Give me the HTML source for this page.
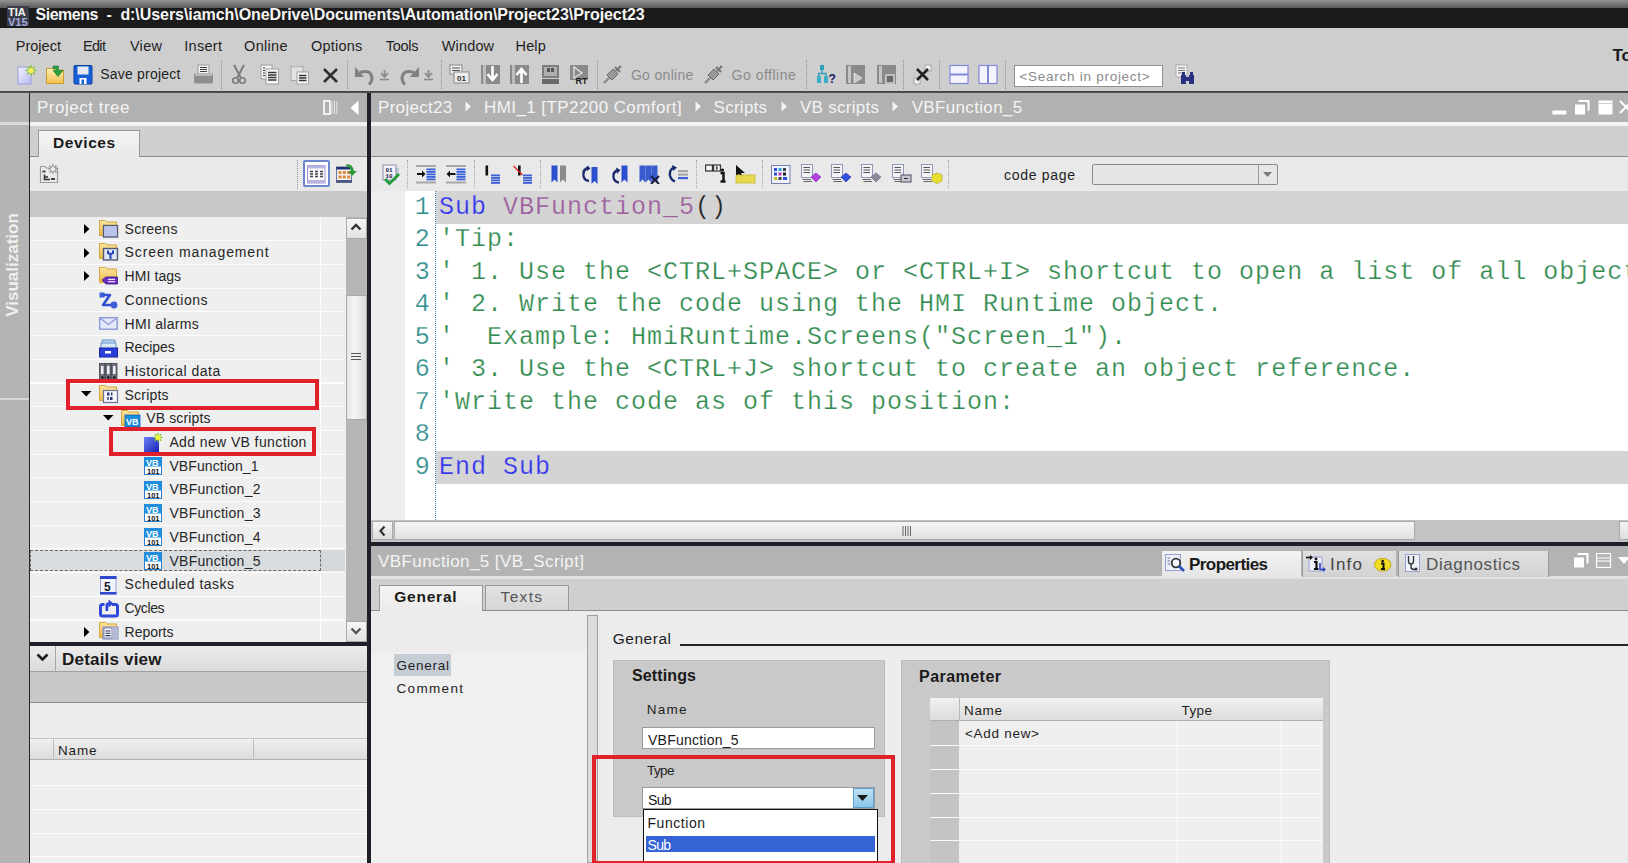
<!DOCTYPE html>
<html><head><meta charset="utf-8"><style>
html,body{margin:0;padding:0;width:1628px;height:863px;overflow:hidden;background:#cecece;}
body{position:relative;font-family:"Liberation Sans",sans-serif;}
div{position:absolute;}
.t{white-space:pre;}
</style></head><body>
<div style="left:0px;top:0px;width:1628px;height:8px;background:linear-gradient(#929292,#5a5a5a)"></div>
<div style="left:0px;top:8px;width:1628px;height:20px;background:#1b1b1b"></div>
<svg style="position:absolute;left:7px;top:6px;" width="22" height="20" viewBox="0 0 22 20"><rect x="0" y="0" width="22" height="20" fill="#3a3d4a"/><text x="1" y="10" font-family="Liberation Sans" font-weight="bold" font-size="11" fill="#f4f4f4">TIA</text><text x="1" y="19.5" font-family="Liberation Sans" font-weight="bold" font-size="11" fill="#a9aee0">V15</text></svg>
<div class="t" style="left:35.60px;top:6.76px;font-size:16px;line-height:16px;color:#f6f6f6;letter-spacing:-0.519px;font-family:'Liberation Sans', sans-serif;font-weight:bold;">Siemens</div>
<div class="t" style="left:106.50px;top:6.76px;font-size:16px;line-height:16px;color:#f6f6f6;letter-spacing:0.000px;font-family:'Liberation Sans', sans-serif;font-weight:bold;">-</div>
<div class="t" style="left:120.40px;top:6.76px;font-size:16px;line-height:16px;color:#f6f6f6;letter-spacing:-0.061px;font-family:'Liberation Sans', sans-serif;font-weight:bold;">d:\Users\iamch\OneDrive\Documents\Automation\Project23\Project23</div>
<div style="left:0px;top:28px;width:1628px;height:63px;background:#cecece"></div>
<div style="left:0px;top:91px;width:1628px;height:2px;background:linear-gradient(#3a3a3a,#5a5a5a)"></div>
<div class="t" style="left:15.70px;top:38.93px;font-size:14.5px;line-height:14.5px;color:#1e1e1e;letter-spacing:0.028px;font-family:'Liberation Sans', sans-serif;font-weight:normal;">Project</div>
<div class="t" style="left:82.90px;top:38.93px;font-size:14.5px;line-height:14.5px;color:#1e1e1e;letter-spacing:-0.629px;font-family:'Liberation Sans', sans-serif;font-weight:normal;">Edit</div>
<div class="t" style="left:129.90px;top:38.93px;font-size:14.5px;line-height:14.5px;color:#1e1e1e;letter-spacing:0.311px;font-family:'Liberation Sans', sans-serif;font-weight:normal;">View</div>
<div class="t" style="left:184.30px;top:38.93px;font-size:14.5px;line-height:14.5px;color:#1e1e1e;letter-spacing:0.287px;font-family:'Liberation Sans', sans-serif;font-weight:normal;">Insert</div>
<div class="t" style="left:244.10px;top:38.93px;font-size:14.5px;line-height:14.5px;color:#1e1e1e;letter-spacing:0.297px;font-family:'Liberation Sans', sans-serif;font-weight:normal;">Online</div>
<div class="t" style="left:311.00px;top:38.93px;font-size:14.5px;line-height:14.5px;color:#1e1e1e;letter-spacing:0.205px;font-family:'Liberation Sans', sans-serif;font-weight:normal;">Options</div>
<div class="t" style="left:385.80px;top:38.93px;font-size:14.5px;line-height:14.5px;color:#1e1e1e;letter-spacing:-0.288px;font-family:'Liberation Sans', sans-serif;font-weight:normal;">Tools</div>
<div class="t" style="left:441.70px;top:38.93px;font-size:14.5px;line-height:14.5px;color:#1e1e1e;letter-spacing:0.166px;font-family:'Liberation Sans', sans-serif;font-weight:normal;">Window</div>
<div class="t" style="left:515.60px;top:38.93px;font-size:14.5px;line-height:14.5px;color:#1e1e1e;letter-spacing:0.093px;font-family:'Liberation Sans', sans-serif;font-weight:normal;">Help</div>
<div class="t" style="left:1612.50px;top:46.61px;font-size:17px;line-height:17px;color:#1a1a1a;letter-spacing:0.000px;font-family:'Liberation Sans', sans-serif;font-weight:bold;">To</div>
<svg style="position:absolute;left:17px;top:64px;" width="22" height="21" viewBox="0 0 22 21"><defs><linearGradient id="np" x1="0" y1="0" x2="1" y2="1"><stop offset="0" stop-color="#f4f4ff"/><stop offset="1" stop-color="#b4b8f0"/></linearGradient></defs><rect x="1" y="3" width="13" height="17" fill="url(#np)" stroke="#9a9ee0" stroke-width="1"/><path d="M14 1 V12 M8.5 6.5 H19.5 M10 2.5 L18 10.5 M18 2.5 L10 10.5" stroke="#8bc83a" stroke-width="1.5"/><circle cx="14" cy="6.5" r="2.6" fill="#f8f050"/></svg>
<svg style="position:absolute;left:45px;top:64px;" width="22" height="21" viewBox="0 0 22 21"><defs><linearGradient id="op" x1="0" y1="0" x2="0" y2="1"><stop offset="0" stop-color="#fff0b0"/><stop offset="1" stop-color="#f0c050"/></linearGradient></defs><path d="M1.5 4.5 H8 L9.5 6 H18.5 V19.5 H1.5Z" fill="url(#op)" stroke="#c89a30" stroke-width="1"/><path d="M8 2 H13.5 V6.5 H18 L13 12.5 L8 6.5 H11 V4.5 H8Z" fill="#2aa040" stroke="#147a2a" stroke-width="0.6"/></svg>
<svg style="position:absolute;left:73px;top:64px;" width="20" height="21" viewBox="0 0 20 21"><rect x="1" y="1.5" width="18" height="18.5" rx="1" fill="#1660d8" stroke="#0c3ea0" stroke-width="1"/><rect x="4.5" y="2.5" width="11" height="8" fill="#e6e9f2"/><rect x="6.5" y="14" width="7" height="6" fill="#fff"/><rect x="8.5" y="15.5" width="2.5" height="4.5" fill="#1660d8"/></svg>
<div class="t" style="left:100.30px;top:67.45px;font-size:14px;line-height:14px;color:#1e1e1e;letter-spacing:0.198px;font-family:'Liberation Sans', sans-serif;font-weight:normal;">Save project</div>
<svg style="position:absolute;left:193px;top:64px;" width="21" height="21" viewBox="0 0 21 21"><rect x="5" y="1" width="11" height="9" fill="#f2f2f2" stroke="#999" stroke-width="1"/><path d="M7 3.5 H14 M7 5.5 H14 M7 7.5 H14" stroke="#444" stroke-width="1"/><path d="M1 11 Q1 9 3 9 H18 Q20 9 20 11 V18 Q20 19.5 18.5 19.5 H2.5 Q1 19.5 1 18Z" fill="#8f8f8f"/><rect x="2" y="9" width="17" height="3" fill="#b8b8b8"/></svg>
<div style="left:220.6px;top:60px;width:0;height:28.5px;border-left:1px dotted #8e8e8e"></div>
<svg style="position:absolute;left:231px;top:64px;" width="17" height="21" viewBox="0 0 17 21"><path d="M3 1 L10 14 M13 1 L6 14" stroke="#7b7b7b" stroke-width="2"/><circle cx="4.5" cy="16.5" r="2.8" fill="none" stroke="#7b7b7b" stroke-width="1.6"/><circle cx="11.5" cy="16.5" r="2.8" fill="none" stroke="#7b7b7b" stroke-width="1.6"/></svg>
<svg style="position:absolute;left:259.5px;top:64px;" width="20" height="21" viewBox="0 0 20 21"><rect x="1" y="1" width="11" height="14" fill="#f4f4f4" stroke="#a0a0a0" stroke-width="1"/><path d="M3 4 H5 M3 6.5 H5 M3 9 H5 M3 11.5 H5" stroke="#333" stroke-width="1.1"/><rect x="6" y="5" width="12.5" height="15" fill="#f8f8f8" stroke="#a0a0a0" stroke-width="1"/><path d="M8 8.5 H16.5 M8 11 H16.5 M8 13.5 H16.5 M8 16 H16.5" stroke="#333" stroke-width="1.3"/></svg>
<svg style="position:absolute;left:289.5px;top:64px;" width="20" height="21" viewBox="0 0 20 21"><rect x="1" y="2.5" width="12" height="14" fill="#e2e2e2" stroke="#a8a8a8" stroke-width="1"/><rect x="4" y="1" width="6" height="3" fill="#c8c8c8"/><rect x="7" y="8" width="11.5" height="12" fill="#f6f6f6" stroke="#a0a0a0" stroke-width="1"/><path d="M9 11.5 H16.5 M9 14 H16.5 M9 16.5 H16.5" stroke="#333" stroke-width="1.3"/></svg>
<svg style="position:absolute;left:321.5px;top:67px;" width="17" height="17" viewBox="0 0 17 17"><path d="M2 2 L15 15 M15 2 L2 15" stroke="#2e2e2e" stroke-width="2.6"/></svg>
<div style="left:347px;top:60px;width:0;height:28.5px;border-left:1px dotted #8e8e8e"></div>
<svg style="position:absolute;left:354px;top:65px;" width="22" height="21" viewBox="0 0 22 21"><path d="M6 7.5 Q17 4 18 13 Q18 17 15 19.5" stroke="#808080" stroke-width="3" fill="none"/><path d="M1 2 V12 H10Z" fill="#808080"/></svg>
<svg style="position:absolute;left:379px;top:70px;" width="11" height="11" viewBox="0 0 11 11"><path d="M5.5 0 V6 M2 3 L5.5 7 L9 3" stroke="#8a8a8a" stroke-width="1.8" fill="none"/><path d="M1 9.5 H10" stroke="#8a8a8a" stroke-width="1.6"/></svg>
<svg style="position:absolute;left:398px;top:65px;" width="22" height="21" viewBox="0 0 22 21"><path d="M16 7.5 Q5 4 4 13 Q4 17 7 19.5" stroke="#808080" stroke-width="3" fill="none"/><path d="M21 2 V12 H12Z" fill="#808080"/></svg>
<svg style="position:absolute;left:423px;top:70px;" width="11" height="11" viewBox="0 0 11 11"><path d="M5.5 0 V6 M2 3 L5.5 7 L9 3" stroke="#8a8a8a" stroke-width="1.8" fill="none"/><path d="M1 9.5 H10" stroke="#8a8a8a" stroke-width="1.6"/></svg>
<div style="left:441px;top:60px;width:0;height:28.5px;border-left:1px dotted #8e8e8e"></div>
<svg style="position:absolute;left:448.5px;top:64px;" width="22" height="21" viewBox="0 0 22 21"><rect x="1" y="1" width="12" height="9" fill="#f0f0f0" stroke="#888" stroke-width="1"/><path d="M3 4 H11 M3 6.5 H11" stroke="#555" stroke-width="1"/><rect x="5" y="8" width="15" height="11" fill="#ececec" stroke="#888" stroke-width="1"/><text x="8" y="17" font-family="Liberation Sans" font-weight="bold" font-size="8" fill="#333">01</text></svg>
<svg style="position:absolute;left:479.5px;top:64px;" width="21" height="21" viewBox="0 0 21 21"><rect x="1" y="1" width="19" height="19" fill="#8a8a8a"/><rect x="3" y="1" width="3" height="19" fill="#bdbdbd"/><path d="M12.5 2 V14 M7.5 10 L12.5 16 L17.5 10" stroke="#fff" stroke-width="2.6" fill="none"/></svg>
<svg style="position:absolute;left:509px;top:64px;" width="21" height="21" viewBox="0 0 21 21"><rect x="1" y="1" width="19" height="19" fill="#8a8a8a"/><rect x="3" y="1" width="3" height="19" fill="#bdbdbd"/><path d="M12.5 19 V7 M7.5 11 L12.5 5 L17.5 11" stroke="#fff" stroke-width="2.6" fill="none"/></svg>
<svg style="position:absolute;left:540.5px;top:64px;" width="19" height="21" viewBox="0 0 19 21"><rect x="1" y="1" width="17" height="13" fill="#7d7d7d"/><rect x="3" y="3" width="13" height="9" fill="#b0b0b0"/><rect x="6" y="4" width="3" height="4" fill="#555"/><rect x="10" y="4" width="3" height="4" fill="#555"/><rect x="1" y="15" width="17" height="5" fill="#6a6a6a"/></svg>
<svg style="position:absolute;left:569px;top:64px;" width="21" height="21" viewBox="0 0 21 21"><rect x="1" y="1" width="18" height="15" fill="#8a8a8a"/><path d="M5 3 L13 9 L5 14Z" fill="none" stroke="#e8e8e8" stroke-width="1.2"/><text x="6.5" y="20" font-family="Liberation Sans" font-weight="bold" font-size="9" fill="#1a1a1a">RT</text></svg>
<div style="left:596.8px;top:60px;width:0;height:28.5px;border-left:1px dotted #8e8e8e"></div>
<svg style="position:absolute;left:602px;top:64px;" width="21" height="21" viewBox="0 0 21 21"><path d="M2 19 L7 14" stroke="#8a8a8a" stroke-width="2.4"/><path d="M5 11 L11 5 L16 10 L10 16Z" fill="#9a9a9a" stroke="#6a6a6a" stroke-width="1"/><path d="M13 3 L18 8 M14 7 L19 2" stroke="#777" stroke-width="2.2"/></svg>
<div class="t" style="left:630.90px;top:67.75px;font-size:14px;line-height:14px;color:#8b8b8b;letter-spacing:0.321px;font-family:'Liberation Sans', sans-serif;font-weight:normal;">Go online</div>
<svg style="position:absolute;left:703px;top:64px;" width="21" height="21" viewBox="0 0 21 21"><path d="M2 19 L7 14" stroke="#8a8a8a" stroke-width="2.4"/><path d="M5 11 L11 5 L16 10 L10 16Z" fill="#9a9a9a" stroke="#6a6a6a" stroke-width="1"/><path d="M13 3 L18 8 M14 7 L19 2" stroke="#777" stroke-width="2.2"/></svg>
<div class="t" style="left:731.60px;top:67.75px;font-size:14px;line-height:14px;color:#8b8b8b;letter-spacing:0.492px;font-family:'Liberation Sans', sans-serif;font-weight:normal;">Go offline</div>
<div style="left:806px;top:60px;width:0;height:28.5px;border-left:1px dotted #8e8e8e"></div>
<svg style="position:absolute;left:815.5px;top:64px;" width="21" height="21" viewBox="0 0 21 21"><rect x="4" y="1" width="4" height="5" fill="#30a0b8"/><path d="M6 6 V9 M2.5 12 V9.5 H10 V12" stroke="#30a0b8" stroke-width="1.4" fill="none"/><rect x="1" y="12" width="4" height="7" fill="#3ab0c8"/><rect x="8" y="12" width="4" height="7" fill="#3ab0c8"/><text x="12.5" y="19" font-family="Liberation Sans" font-weight="bold" font-size="12" fill="#1a2060">?</text></svg>
<svg style="position:absolute;left:845px;top:64px;" width="21" height="21" viewBox="0 0 21 21"><rect x="1" y="1" width="19" height="19" fill="#8a8a8a"/><rect x="3" y="2" width="3" height="17" fill="#c4c4c4"/><path d="M9 9 L17 14 L9 19Z" fill="#c8c8c8" stroke="#e8e8e8" stroke-width="0.8"/></svg>
<svg style="position:absolute;left:876px;top:64px;" width="21" height="21" viewBox="0 0 21 21"><rect x="1" y="1" width="19" height="19" fill="#8a8a8a"/><rect x="3" y="2" width="3" height="17" fill="#c4c4c4"/><rect x="10" y="11" width="8" height="8" fill="#6a6a6a" stroke="#e8e8e8" stroke-width="1.2"/></svg>
<div style="left:903.3px;top:60px;width:0;height:28.5px;border-left:1px dotted #8e8e8e"></div>
<svg style="position:absolute;left:912.5px;top:64px;" width="20" height="21" viewBox="0 0 20 21"><rect x="12" y="1" width="6" height="6" fill="#f2f2f2" stroke="#999" stroke-width="0.8"/><rect x="1" y="14" width="6" height="6" fill="#f2f2f2" stroke="#999" stroke-width="0.8"/><path d="M4 5 L15 16 M15 5 L4 16" stroke="#222" stroke-width="2.6"/></svg>
<div style="left:939px;top:60px;width:0;height:28.5px;border-left:1px dotted #8e8e8e"></div>
<svg style="position:absolute;left:948.5px;top:64px;" width="20" height="21" viewBox="0 0 20 21"><rect x="1" y="1.5" width="18" height="18" fill="#f4f4ff" stroke="#8088d8" stroke-width="1.2"/><path d="M1 10.5 H19" stroke="#8088d8" stroke-width="2"/></svg>
<svg style="position:absolute;left:978px;top:64px;" width="20" height="21" viewBox="0 0 20 21"><rect x="1" y="1.5" width="18" height="18" fill="#f4f4ff" stroke="#8088d8" stroke-width="1.2"/><path d="M10 1.5 V19.5" stroke="#8088d8" stroke-width="2"/></svg>
<div style="left:1005.2px;top:60px;width:0;height:28.5px;border-left:1px dotted #8e8e8e"></div>
<div style="left:1013.8px;top:65.4px;width:149.4px;height:21.6px;background:#fff;border:1px solid #8f8f8f;box-sizing:border-box"></div>
<div class="t" style="left:1019.50px;top:69.77px;font-size:13.5px;line-height:13.5px;color:#8a8a8a;letter-spacing:0.729px;font-family:'Liberation Sans', sans-serif;font-weight:normal;">&lt;Search in project&gt;</div>
<svg style="position:absolute;left:1174.5px;top:64px;" width="21" height="21" viewBox="0 0 21 21"><rect x="1" y="1" width="11" height="12" fill="#f0f0f0" stroke="#a0a0a0" stroke-width="0.8"/><path d="M3 4 H10 M3 6.5 H10 M3 9 H10" stroke="#777" stroke-width="1"/><rect x="6" y="11" width="5" height="9" fill="#2a3080"/><rect x="14" y="11" width="5" height="9" fill="#2a3080"/><rect x="10" y="13" width="5" height="4" fill="#2a3080"/><rect x="7" y="8" width="3" height="3" fill="#2a3080"/><rect x="15" y="8" width="3" height="3" fill="#2a3080"/></svg>
<div style="left:0px;top:93px;width:28.5px;height:770px;background:#b4b4b4"></div>
<div style="left:28.5px;top:93px;width:1.6px;height:770px;background:#23232b"></div>
<div style="left:0px;top:122px;width:29px;height:3px;background:#dadada"></div>
<div style="left:0px;top:398px;width:29px;height:2px;background:#d8d8d8"></div>
<div class="t" style="left:-41.6px;top:254.6px;width:110px;height:20px;font-size:17px;line-height:20px;color:#efefef;font-weight:bold;transform:rotate(-90deg);text-align:center;letter-spacing:0px">Visualization</div>
<div style="left:30px;top:93px;width:337px;height:29px;background:#b1b1b1"></div>
<div class="t" style="left:37.00px;top:99.01px;font-size:17px;line-height:17px;color:#f4f4f4;letter-spacing:0.507px;font-family:'Liberation Sans', sans-serif;font-weight:normal;">Project tree</div>
<div style="left:30px;top:122px;width:337px;height:4px;background:#f2f2f2"></div>
<div style="left:30px;top:126px;width:337px;height:30px;background:#cfcfcf"></div>
<div style="left:30px;top:156px;width:337px;height:1px;background:#8d8d8d"></div>
<div style="left:38px;top:130px;width:102px;height:27px;background:linear-gradient(#f4f4f4,#e9e9e9);border:1px solid #999;border-bottom:none;box-sizing:border-box"></div>
<div class="t" style="left:53.00px;top:134.88px;font-size:15.5px;line-height:15.5px;color:#1a1a1a;letter-spacing:0.599px;font-family:'Liberation Sans', sans-serif;font-weight:bold;">Devices</div>
<div style="left:30px;top:157px;width:337px;height:34px;background:#e9e9e9"></div>
<div style="left:30px;top:191px;width:337px;height:26px;background:#c7c7c7"></div>
<div style="left:30px;top:217px;width:337px;height:425px;background:#efefef"></div>
<div style="left:367px;top:93px;width:4px;height:770px;background:#1f1f29"></div>
<div style="left:371px;top:93px;width:1257px;height:29px;background:#b1b1b1"></div>
<div style="left:371px;top:122px;width:1257px;height:4px;background:#f2f2f2"></div>
<div style="left:371px;top:126px;width:1257px;height:30px;background:#cfcfcf"></div>
<div style="left:371px;top:156px;width:1257px;height:1px;background:#8d8d8d"></div>
<div style="left:371px;top:157px;width:1257px;height:34px;background:#e9e9e9"></div>
<div style="left:371px;top:191px;width:1257px;height:329px;background:#ffffff"></div>
<div style="left:371px;top:191px;width:34px;height:329px;background:#eeeeee"></div>
<div style="left:436px;top:191px;width:1192px;height:33px;background:#d4d4d4"></div>
<div style="left:436px;top:451px;width:1192px;height:33px;background:#d4d4d4"></div>
<div style="left:435px;top:191px;width:0;height:329px;border-left:1px dotted #3a8aa0"></div>
<div class="t" style="left:378.00px;top:99.01px;font-size:17px;line-height:17px;color:#f4f4f4;letter-spacing:0.310px;font-family:'Liberation Sans', sans-serif;font-weight:normal;">Project23</div>
<div class="t" style="left:484.10px;top:99.01px;font-size:17px;line-height:17px;color:#f4f4f4;letter-spacing:0.411px;font-family:'Liberation Sans', sans-serif;font-weight:normal;">HMI_1 [TP2200 Comfort]</div>
<div class="t" style="left:713.60px;top:99.01px;font-size:17px;line-height:17px;color:#f4f4f4;letter-spacing:0.257px;font-family:'Liberation Sans', sans-serif;font-weight:normal;">Scripts</div>
<div class="t" style="left:800.00px;top:99.01px;font-size:17px;line-height:17px;color:#f4f4f4;letter-spacing:0.265px;font-family:'Liberation Sans', sans-serif;font-weight:normal;">VB scripts</div>
<div class="t" style="left:911.70px;top:99.01px;font-size:17px;line-height:17px;color:#f4f4f4;letter-spacing:0.337px;font-family:'Liberation Sans', sans-serif;font-weight:normal;">VBFunction_5</div>
<svg style="position:absolute;left:465px;top:101px;" width="7" height="11" viewBox="0 0 7 11"><path d="M0.5 0.5 L6 5.5 L0.5 10.5Z" fill="#f4f4f4"/></svg>
<svg style="position:absolute;left:694.5px;top:101px;" width="7" height="11" viewBox="0 0 7 11"><path d="M0.5 0.5 L6 5.5 L0.5 10.5Z" fill="#f4f4f4"/></svg>
<svg style="position:absolute;left:781px;top:101px;" width="7" height="11" viewBox="0 0 7 11"><path d="M0.5 0.5 L6 5.5 L0.5 10.5Z" fill="#f4f4f4"/></svg>
<svg style="position:absolute;left:892px;top:101px;" width="7" height="11" viewBox="0 0 7 11"><path d="M0.5 0.5 L6 5.5 L0.5 10.5Z" fill="#f4f4f4"/></svg>
<div class="t" style="left:414.70px;top:194.74px;font-size:25px;line-height:25px;color:#2f8c8c;letter-spacing:0.000px;font-family:'Liberation Mono', monospace;font-weight:normal;-webkit-text-stroke:0.25px #fff;">1</div>
<div class="t" style="left:439.00px;top:194.74px;font-size:25px;line-height:25px;color:#3333ee;letter-spacing:0.000px;font-family:'Liberation Mono', monospace;font-weight:normal;white-space:pre;letter-spacing:1px;-webkit-text-stroke:0.25px #d4d4d4;">Sub </div>
<div class="t" style="left:503.00px;top:194.74px;font-size:25px;line-height:25px;color:#9c5e9c;letter-spacing:0.000px;font-family:'Liberation Mono', monospace;font-weight:normal;white-space:pre;letter-spacing:1px;-webkit-text-stroke:0.25px #d4d4d4;">VBFunction_5</div>
<div class="t" style="left:695.00px;top:194.74px;font-size:25px;line-height:25px;color:#222222;letter-spacing:0.000px;font-family:'Liberation Mono', monospace;font-weight:normal;white-space:pre;letter-spacing:1px;-webkit-text-stroke:0.25px #d4d4d4;">()</div>
<div class="t" style="left:414.70px;top:227.24px;font-size:25px;line-height:25px;color:#2f8c8c;letter-spacing:0.000px;font-family:'Liberation Mono', monospace;font-weight:normal;-webkit-text-stroke:0.25px #fff;">2</div>
<div class="t" style="left:439.00px;top:227.24px;font-size:25px;line-height:25px;color:#318a4e;letter-spacing:0.000px;font-family:'Liberation Mono', monospace;font-weight:normal;white-space:pre;letter-spacing:1px;-webkit-text-stroke:0.25px #ffffff;">&#x27;Tip:</div>
<div class="t" style="left:414.70px;top:259.74px;font-size:25px;line-height:25px;color:#2f8c8c;letter-spacing:0.000px;font-family:'Liberation Mono', monospace;font-weight:normal;-webkit-text-stroke:0.25px #fff;">3</div>
<div class="t" style="left:439.00px;top:259.74px;font-size:25px;line-height:25px;color:#318a4e;letter-spacing:0.000px;font-family:'Liberation Mono', monospace;font-weight:normal;white-space:pre;letter-spacing:1px;-webkit-text-stroke:0.25px #ffffff;">&#x27; 1. Use the &lt;CTRL+SPACE&gt; or &lt;CTRL+I&gt; shortcut to open a list of all objects and functions.</div>
<div class="t" style="left:414.70px;top:292.24px;font-size:25px;line-height:25px;color:#2f8c8c;letter-spacing:0.000px;font-family:'Liberation Mono', monospace;font-weight:normal;-webkit-text-stroke:0.25px #fff;">4</div>
<div class="t" style="left:439.00px;top:292.24px;font-size:25px;line-height:25px;color:#318a4e;letter-spacing:0.000px;font-family:'Liberation Mono', monospace;font-weight:normal;white-space:pre;letter-spacing:1px;-webkit-text-stroke:0.25px #ffffff;">&#x27; 2. Write the code using the HMI Runtime object.</div>
<div class="t" style="left:414.70px;top:324.74px;font-size:25px;line-height:25px;color:#2f8c8c;letter-spacing:0.000px;font-family:'Liberation Mono', monospace;font-weight:normal;-webkit-text-stroke:0.25px #fff;">5</div>
<div class="t" style="left:439.00px;top:324.74px;font-size:25px;line-height:25px;color:#318a4e;letter-spacing:0.000px;font-family:'Liberation Mono', monospace;font-weight:normal;white-space:pre;letter-spacing:1px;-webkit-text-stroke:0.25px #ffffff;">&#x27;  Example: HmiRuntime.Screens(&quot;Screen_1&quot;).</div>
<div class="t" style="left:414.70px;top:357.24px;font-size:25px;line-height:25px;color:#2f8c8c;letter-spacing:0.000px;font-family:'Liberation Mono', monospace;font-weight:normal;-webkit-text-stroke:0.25px #fff;">6</div>
<div class="t" style="left:439.00px;top:357.24px;font-size:25px;line-height:25px;color:#318a4e;letter-spacing:0.000px;font-family:'Liberation Mono', monospace;font-weight:normal;white-space:pre;letter-spacing:1px;-webkit-text-stroke:0.25px #ffffff;">&#x27; 3. Use the &lt;CTRL+J&gt; shortcut to create an object reference.</div>
<div class="t" style="left:414.70px;top:389.74px;font-size:25px;line-height:25px;color:#2f8c8c;letter-spacing:0.000px;font-family:'Liberation Mono', monospace;font-weight:normal;-webkit-text-stroke:0.25px #fff;">7</div>
<div class="t" style="left:439.00px;top:389.74px;font-size:25px;line-height:25px;color:#318a4e;letter-spacing:0.000px;font-family:'Liberation Mono', monospace;font-weight:normal;white-space:pre;letter-spacing:1px;-webkit-text-stroke:0.25px #ffffff;">&#x27;Write the code as of this position:</div>
<div class="t" style="left:414.70px;top:422.24px;font-size:25px;line-height:25px;color:#2f8c8c;letter-spacing:0.000px;font-family:'Liberation Mono', monospace;font-weight:normal;-webkit-text-stroke:0.25px #fff;">8</div>
<div class="t" style="left:414.70px;top:454.74px;font-size:25px;line-height:25px;color:#2f8c8c;letter-spacing:0.000px;font-family:'Liberation Mono', monospace;font-weight:normal;-webkit-text-stroke:0.25px #fff;">9</div>
<div class="t" style="left:439.00px;top:454.74px;font-size:25px;line-height:25px;color:#3333ee;letter-spacing:0.000px;font-family:'Liberation Mono', monospace;font-weight:normal;white-space:pre;letter-spacing:1px;-webkit-text-stroke:0.25px #d4d4d4;">End Sub</div>
<div style="left:371px;top:520px;width:1257px;height:22px;background:#c3c3c3"></div>
<div style="left:372px;top:521px;width:21px;height:19px;background:linear-gradient(#f4f4f4,#dedede);border:1px solid #aaa;box-sizing:border-box"></div>
<svg style="position:absolute;left:378px;top:525px;" width="9" height="12" viewBox="0 0 9 12"><path d="M6.5 1.5 L2.5 6 L6.5 10.5" stroke="#333" stroke-width="2.2" fill="none"/></svg>
<div style="left:394px;top:521px;width:1021px;height:19px;background:linear-gradient(#f6f6f6,#e0e0e0);border:1px solid #aaa;box-sizing:border-box"></div>
<svg style="position:absolute;left:902px;top:526px;" width="9" height="10" viewBox="0 0 9 10"><path d="M1 0v10M3.5 0v10M6 0v10M8.5 0v10" stroke="#666" stroke-width="1"/></svg>
<div style="left:1619px;top:521px;width:12px;height:19px;background:linear-gradient(#f4f4f4,#dedede);border:1px solid #aaa;box-sizing:border-box"></div>
<div style="left:371px;top:542px;width:1257px;height:4px;background:#1f1f29"></div>
<svg style="position:absolute;left:1552px;top:109.5px;" width="15" height="5" viewBox="0 0 15 5"><rect x="0.4" y="0.5" width="14" height="4" fill="#fff"/></svg>
<svg style="position:absolute;left:1574px;top:99.5px;" width="16" height="15" viewBox="0 0 16 15"><path d="M4.5 1 H14.5 V10.5" stroke="#fff" stroke-width="2" fill="none"/><rect x="1" y="4.5" width="10" height="10" fill="#fff"/></svg>
<svg style="position:absolute;left:1598px;top:99.5px;" width="15" height="15" viewBox="0 0 15 15"><rect x="0.5" y="0.5" width="14" height="14" fill="#fff"/><rect x="0.5" y="3" width="14" height="1" fill="#d0d0d0"/></svg>
<svg style="position:absolute;left:1619px;top:100px;" width="10" height="15" viewBox="0 0 10 15"><path d="M1 1 L13 13 M13 1 L1 13" stroke="#fff" stroke-width="2"/></svg>
<svg style="position:absolute;left:323px;top:99.5px;" width="15" height="15" viewBox="0 0 15 15"><rect x="1" y="1" width="6" height="13" fill="none" stroke="#fff" stroke-width="1.6"/><path d="M9 1 V14 M11.5 1 V14 M13.8 1 V14" stroke="#e6e6e6" stroke-width="1"/></svg>
<svg style="position:absolute;left:349.5px;top:99.5px;" width="9" height="16" viewBox="0 0 9 16"><path d="M8.5 0.5 V15 L0.5 7.75Z" fill="#fff"/></svg>
<svg style="position:absolute;left:38.5px;top:163.5px;" width="21" height="20" viewBox="0 0 21 20"><path d="M1.5 2.5 H6 L7 4 H18.5 V18.5 H1.5Z" fill="#ebebeb" stroke="#9a9a9a" stroke-width="1.2"/><rect x="3.5" y="6.5" width="3" height="2" fill="#444"/><path d="M5.5 10.5 V15.5 H11 M5.5 13 H9" stroke="#333" stroke-width="1.6" fill="none"/><rect x="12" y="14" width="4" height="2" fill="#444"/><path d="M14 0 V10 M9 5 H19 M10.5 1.5 L17.5 8.5 M17.5 1.5 L10.5 8.5" stroke="#8a8a8a" stroke-width="1.2"/><circle cx="14" cy="5" r="2" fill="#f2f2f2"/></svg>
<div style="left:296.5px;top:160px;width:0;height:28.5px;border-left:1px dotted #909090"></div>
<div style="left:302.5px;top:160px;width:27.3px;height:27.1px;background:#fff;border:2px solid #6a88cc;border-radius:2px;box-sizing:border-box"></div>
<svg style="position:absolute;left:307px;top:164.5px;" width="19" height="19" viewBox="0 0 19 19"><rect x="0.5" y="0.5" width="17.5" height="17.5" fill="#fafaff" stroke="#9a98d0" stroke-width="1"/><rect x="0.5" y="0.5" width="17.5" height="3" fill="#b8b6e0"/><rect x="0.5" y="15" width="17.5" height="3" fill="#b8b6e0"/><path d="M3 6.5 H6 M8 6.5 H11 M13 6.5 H16 M3 9 H6 M8 9 H11 M13 9 H16 M3 11.5 H6 M8 11.5 H11 M13 11.5 H16" stroke="#444" stroke-width="1.3"/></svg>
<svg style="position:absolute;left:335.5px;top:162.5px;" width="22" height="21" viewBox="0 0 22 21"><rect x="0.5" y="4" width="15" height="15.5" fill="#f4f4ff" stroke="#6a7090" stroke-width="1"/><rect x="0.5" y="4" width="15" height="2.5" fill="#1a3070"/><rect x="0.5" y="17" width="15" height="2.5" fill="#4a5a80"/><rect x="2.5" y="8.0" width="3" height="3" fill="#e08a30"/><rect x="2.5" y="12.5" width="3" height="3" fill="#e08a30"/><rect x="6.8" y="8.0" width="3" height="3" fill="#e08a30"/><rect x="6.8" y="12.5" width="3" height="3" fill="#e08a30"/><rect x="11.1" y="8.0" width="3" height="3" fill="#e08a30"/><rect x="11.1" y="12.5" width="3" height="3" fill="#e08a30"/><path d="M9 2 Q16 -1 18 8 H21 L16 13 L12 8 H15 Q14 4 9 2Z" fill="#2a9a38"/></svg>
<svg style="position:absolute;left:379.5px;top:163.5px;" width="21" height="22" viewBox="0 0 21 22"><rect x="3" y="1" width="13" height="15" fill="#f2f4fa" stroke="#8890b0" stroke-width="1"/><path d="M16 3 V14 M18 4 V13" stroke="#a0a8c0" stroke-width="1"/><text x="5.5" y="8" font-family="Liberation Mono" font-weight="bold" font-size="6" fill="#1a2050">01</text><text x="5.5" y="14" font-family="Liberation Mono" font-weight="bold" font-size="6" fill="#1a2050">10</text><path d="M5 15 L9.5 19.5 L19 10" stroke="#1e9a36" stroke-width="2.8" fill="none"/></svg>
<div style="left:406.7px;top:160px;width:0;height:28px;border-left:1px dotted #a0a0a0"></div>
<svg style="position:absolute;left:415.5px;top:164.5px;" width="21" height="19" viewBox="0 0 21 19"><rect x="0" y="0" width="20" height="2" fill="#a8a8a8"/><rect x="0" y="16.5" width="20" height="2" fill="#a8a8a8"/><path d="M1 9 H7" stroke="#111" stroke-width="2"/><path d="M6 5.5 L9.5 9 L6 12.5Z" fill="#111"/><rect x="10.5" y="3.5" width="9" height="1.8" fill="#3a60d8"/><rect x="10.5" y="6.0" width="9" height="1.8" fill="#3a60d8"/><rect x="10.5" y="8.5" width="9" height="1.8" fill="#3a60d8"/><rect x="10.5" y="11.0" width="9" height="1.8" fill="#3a60d8"/><rect x="10.5" y="13.5" width="9" height="1.8" fill="#3a60d8"/></svg>
<svg style="position:absolute;left:446px;top:164.5px;" width="21" height="19" viewBox="0 0 21 19"><rect x="0" y="0" width="20" height="2" fill="#a8a8a8"/><rect x="0" y="16.5" width="20" height="2" fill="#a8a8a8"/><path d="M3 9 H9.5" stroke="#111" stroke-width="2"/><path d="M4 5.5 L0.5 9 L4 12.5Z" fill="#111"/><rect x="10.5" y="3.5" width="9" height="1.8" fill="#3a60d8"/><rect x="10.5" y="6.0" width="9" height="1.8" fill="#3a60d8"/><rect x="10.5" y="8.5" width="9" height="1.8" fill="#3a60d8"/><rect x="10.5" y="11.0" width="9" height="1.8" fill="#3a60d8"/><rect x="10.5" y="13.5" width="9" height="1.8" fill="#3a60d8"/></svg>
<div style="left:473.5px;top:160px;width:0;height:28px;border-left:1px dotted #a0a0a0"></div>
<svg style="position:absolute;left:484px;top:164.5px;" width="18" height="19" viewBox="0 0 18 19"><rect x="1.5" y="0.5" width="2.6" height="10" fill="#111"/><rect x="7" y="9.5" width="9" height="1.8" fill="#3a60d8"/><rect x="7" y="12.0" width="9" height="1.8" fill="#3a60d8"/><rect x="7" y="14.5" width="9" height="1.8" fill="#3a60d8"/><rect x="7" y="17.0" width="9" height="1.8" fill="#3a60d8"/></svg>
<svg style="position:absolute;left:512.5px;top:164.5px;" width="21" height="19" viewBox="0 0 21 19"><rect x="5" y="0.5" width="2.6" height="10" fill="#111"/><path d="M0.5 1 L9.5 10" stroke="#e02020" stroke-width="1.3"/><rect x="10" y="9.5" width="9" height="1.8" fill="#3a60d8"/><rect x="10" y="12.0" width="9" height="1.8" fill="#3a60d8"/><rect x="10" y="14.5" width="9" height="1.8" fill="#3a60d8"/><rect x="10" y="17.0" width="9" height="1.8" fill="#3a60d8"/></svg>
<div style="left:539.5px;top:160px;width:0;height:28px;border-left:1px dotted #a0a0a0"></div>
<svg style="position:absolute;left:551px;top:164.5px;" width="17" height="19" viewBox="0 0 17 19"><g transform="translate(0.5,0.5)"><path d="M0 0 H6 V17 L3 14 L0 17Z" fill="#2a50d0"/></g><g transform="translate(9,0.5)"><path d="M0 0 H6 V17 L3 14 L0 17Z" fill="#8a8a8a"/></g></svg>
<svg style="position:absolute;left:580.5px;top:164.5px;" width="18" height="19" viewBox="0 0 18 19"><g transform="translate(10.5,2)"><path d="M0 0 H6 V17 L3 14 L0 17Z" fill="#2a50d0"/></g><path d="M8 2.5 Q1.5 4 2.5 11 Q3.5 15.5 8 16" stroke="#1a2a70" stroke-width="2.4" fill="none"/><path d="M6 0.5 L9.5 3.5 L6 6Z" fill="#1a2a70"/></svg>
<svg style="position:absolute;left:610.5px;top:164.5px;" width="18" height="19" viewBox="0 0 18 19"><g transform="translate(10.5,0.5)"><path d="M0 0 H6 V17 L3 14 L0 17Z" fill="#2a50d0"/></g><path d="M7.5 5 Q1.5 6.5 2.5 12.5 Q3.5 17 8 17.5" stroke="#1a2a70" stroke-width="2.4" fill="none"/><path d="M5 2.5 L9.5 5 L6 9Z" fill="#1a2a70"/></svg>
<svg style="position:absolute;left:638.5px;top:164.5px;" width="21" height="19" viewBox="0 0 21 19"><g transform="translate(0.5,0.5)"><path d="M0 0 H6 V17 L3 14 L0 17Z" fill="#3a5ad0"/></g><g transform="translate(6.5,0.5)"><path d="M0 0 H6 V17 L3 14 L0 17Z" fill="#3a5ad0"/></g><g transform="translate(12.5,0.5)"><path d="M0 0 H6 V17 L3 14 L0 17Z" fill="#3a5ad0"/></g><path d="M12 11 L20 19 M20 11 L12 19" stroke="#1a1a40" stroke-width="2"/></svg>
<svg style="position:absolute;left:668px;top:164.5px;" width="21" height="19" viewBox="0 0 21 19"><path d="M6.5 2 Q1 4.5 2 10.5 Q3 15 7 16.5" stroke="#1a2a70" stroke-width="2.4" fill="none"/><path d="M4 0 L9 2.5 L5 6Z" fill="#1a2a70"/><rect x="10" y="5" width="10" height="2.2" fill="#a8a8a8"/><rect x="10" y="8.5" width="10" height="2.2" fill="#a8a8a8"/><rect x="10" y="12" width="10" height="2.2" fill="#3a60d8"/></svg>
<div style="left:695.6px;top:160px;width:0;height:28px;border-left:1px dotted #a0a0a0"></div>
<svg style="position:absolute;left:704.5px;top:164px;" width="21" height="20" viewBox="0 0 21 20"><rect x="0.5" y="1" width="7" height="6" fill="#e8e8e8" stroke="#333" stroke-width="1.2"/><rect x="8.5" y="1" width="7" height="6" fill="#e8e8e8" stroke="#333" stroke-width="1.2"/><rect x="3" y="2.5" width="2" height="3" fill="#fff"/><rect x="11" y="2.5" width="1.5" height="3" fill="#333"/><circle cx="17.5" cy="6" r="1.6" fill="#111"/><path d="M15.5 9 H18.5 V17.5 M15.5 17.5 H20.5" stroke="#111" stroke-width="2.4" fill="none"/></svg>
<svg style="position:absolute;left:734.5px;top:164px;" width="21" height="20" viewBox="0 0 21 20"><path d="M1 1 V13 L4 10 L6.5 15 L8.5 14 L6 9 H10Z" fill="#111"/><rect x="1" y="11" width="19" height="8" fill="#e8d850" stroke="#c8b830" stroke-width="0.8"/><path d="M1 1 V11 L4 8.5 L6.5 12" fill="#111"/></svg>
<div style="left:761.5px;top:160px;width:0;height:28px;border-left:1px dotted #a0a0a0"></div>
<svg style="position:absolute;left:771px;top:164.5px;" width="20" height="19" viewBox="0 0 20 19"><rect x="0.5" y="0.5" width="18.5" height="18" fill="#f0f2ff" stroke="#7880b0" stroke-width="1"/><rect x="3" y="3" width="3" height="3" fill="#3050e0"/><rect x="7.5" y="3" width="3" height="3" fill="#30a0e0"/><rect x="12" y="3" width="3" height="3" fill="#404040"/><rect x="3" y="7.5" width="3" height="3" fill="#3050e0"/><rect x="7.5" y="7.5" width="3" height="3" fill="#c030c0"/><rect x="12" y="7.5" width="3" height="3" fill="#202020"/><rect x="3" y="12" width="3" height="3" fill="#c0c020"/><rect x="7.5" y="12" width="3" height="3" fill="#404040"/><rect x="12" y="12" width="4" height="3" fill="#3050e0"/></svg>
<svg style="position:absolute;left:800.5px;top:164px;" width="22" height="21" viewBox="0 0 22 21"><rect x="0.5" y="0.5" width="11" height="13" fill="#f4f4f8" stroke="#9098b8" stroke-width="1"/><path d="M3 3.5 H9 M3 6 H9 M3 8.5 H9" stroke="#555" stroke-width="1"/><path d="M2 3.5 H2.5 M2 6 H2.5 M2 8.5 H2.5" stroke="#333" stroke-width="1"/><path d="M1.5 15.5 H10 M2.5 17.5 H11" stroke="#666" stroke-width="1.1"/><path d="M15 9 L20 13 L15 18 L10 13Z" fill="#b040e0" stroke="#8020b0" stroke-width="0.6"/></svg>
<svg style="position:absolute;left:830.5px;top:164px;" width="22" height="21" viewBox="0 0 22 21"><rect x="0.5" y="0.5" width="11" height="13" fill="#f4f4f8" stroke="#9098b8" stroke-width="1"/><path d="M3 3.5 H9 M3 6 H9 M3 8.5 H9" stroke="#555" stroke-width="1"/><path d="M2 3.5 H2.5 M2 6 H2.5 M2 8.5 H2.5" stroke="#333" stroke-width="1"/><path d="M1.5 15.5 H10 M2.5 17.5 H11" stroke="#666" stroke-width="1.1"/><path d="M15 9 L20 13 L15 18 L10 13Z" fill="#3050e0" stroke="#2030a0" stroke-width="0.6"/></svg>
<svg style="position:absolute;left:861px;top:164px;" width="22" height="21" viewBox="0 0 22 21"><rect x="0.5" y="0.5" width="11" height="13" fill="#f4f4f8" stroke="#9098b8" stroke-width="1"/><path d="M3 3.5 H9 M3 6 H9 M3 8.5 H9" stroke="#555" stroke-width="1"/><path d="M2 3.5 H2.5 M2 6 H2.5 M2 8.5 H2.5" stroke="#333" stroke-width="1"/><path d="M1.5 15.5 H10 M2.5 17.5 H11" stroke="#666" stroke-width="1.1"/><path d="M15 9 L20 13 L15 18 L10 13Z" fill="#8a8a9a" stroke="#6a6a7a" stroke-width="0.6"/></svg>
<svg style="position:absolute;left:891.5px;top:164px;" width="22" height="21" viewBox="0 0 22 21"><rect x="0.5" y="0.5" width="11" height="13" fill="#f4f4f8" stroke="#9098b8" stroke-width="1"/><path d="M3 3.5 H9 M3 6 H9 M3 8.5 H9" stroke="#555" stroke-width="1"/><path d="M2 3.5 H2.5 M2 6 H2.5 M2 8.5 H2.5" stroke="#333" stroke-width="1"/><path d="M1.5 15.5 H10 M2.5 17.5 H11" stroke="#666" stroke-width="1.1"/><rect x="9" y="11" width="10" height="7" fill="#c8c8d0" stroke="#5a5a6a" stroke-width="1.1"/><path d="M12 14.5 H16" stroke="#333" stroke-width="1.1"/></svg>
<svg style="position:absolute;left:921px;top:164px;" width="22" height="21" viewBox="0 0 22 21"><rect x="0.5" y="0.5" width="11" height="13" fill="#f4f4f8" stroke="#9098b8" stroke-width="1"/><path d="M3 3.5 H9 M3 6 H9 M3 8.5 H9" stroke="#555" stroke-width="1"/><path d="M2 3.5 H2.5 M2 6 H2.5 M2 8.5 H2.5" stroke="#333" stroke-width="1"/><path d="M1.5 15.5 H10 M2.5 17.5 H11" stroke="#666" stroke-width="1.1"/><path d="M11 11 L16 9 L21 11 V17 L16 19.5 L11 17Z" fill="#e6e030" stroke="#b0a820" stroke-width="0.6"/></svg>
<div style="left:947.7px;top:160px;width:0;height:28px;border-left:1px dotted #a0a0a0"></div>
<div class="t" style="left:1004.00px;top:167.95px;font-size:14px;line-height:14px;color:#1e1e1e;letter-spacing:0.701px;font-family:'Liberation Sans', sans-serif;font-weight:normal;">code page</div>
<div style="left:1091.5px;top:164.4px;width:186.8px;height:21px;background:#e6e6e6;border:1px solid #8a8a8a;border-radius:2px;box-sizing:border-box"></div>
<div style="left:1258.4px;top:165.4px;width:1px;height:19px;background:#9a9a9a"></div>
<svg style="position:absolute;left:1263px;top:172px;" width="10" height="6" viewBox="0 0 10 6"><path d="M0 0 H9 L4.5 5Z" fill="#7a7a7a"/></svg>
<div style="left:371px;top:546px;width:1257px;height:30px;background:#b3b3b3"></div>
<div class="t" style="left:378.00px;top:552.61px;font-size:17px;line-height:17px;color:#f4f4f4;letter-spacing:0.411px;font-family:'Liberation Sans', sans-serif;font-weight:normal;">VBFunction_5 [VB_Script]</div>
<div style="left:371px;top:576px;width:1257px;height:3px;background:#e2e2e2"></div>
<div style="left:371px;top:579px;width:1257px;height:31px;background:#cfcfcf"></div>
<div style="left:371px;top:610px;width:1257px;height:1px;background:#8d8d8d"></div>
<div style="left:379px;top:585px;width:104px;height:26px;background:linear-gradient(#f4f4f4,#ebebeb);border:1px solid #999;border-bottom:none;box-sizing:border-box"></div>
<div class="t" style="left:394.30px;top:588.88px;font-size:15.5px;line-height:15.5px;color:#1a1a1a;letter-spacing:0.763px;font-family:'Liberation Sans', sans-serif;font-weight:bold;">General</div>
<div style="left:485px;top:585px;width:84px;height:25px;background:linear-gradient(#e2e2e2,#d6d6d6);border:1px solid #999;border-bottom:none;box-sizing:border-box"></div>
<div class="t" style="left:500.60px;top:588.88px;font-size:15.5px;line-height:15.5px;color:#555555;letter-spacing:1.306px;font-family:'Liberation Sans', sans-serif;font-weight:normal;">Texts</div>
<div style="left:371px;top:611px;width:1257px;height:252px;background:#ececec"></div>
<div style="left:371px;top:653px;width:216px;height:210px;background:#f0f0f0"></div>
<div style="left:393.7px;top:653.8px;width:57.6px;height:22.2px;background:#c6ccd4"></div>
<div class="t" style="left:396.50px;top:658.57px;font-size:13.5px;line-height:13.5px;color:#1e1e1e;letter-spacing:0.745px;font-family:'Liberation Sans', sans-serif;font-weight:normal;">General</div>
<div class="t" style="left:396.50px;top:682.27px;font-size:13.5px;line-height:13.5px;color:#1e1e1e;letter-spacing:1.330px;font-family:'Liberation Sans', sans-serif;font-weight:normal;">Comment</div>
<div style="left:587px;top:615px;width:11px;height:248px;background:#dcdcdc;border:1px solid #a0a0a0;box-sizing:border-box"></div>
<div class="t" style="left:612.80px;top:630.58px;font-size:15.5px;line-height:15.5px;color:#1e1e1e;letter-spacing:0.509px;font-family:'Liberation Sans', sans-serif;font-weight:normal;">General</div>
<div style="left:679.6px;top:644px;width:948.4px;height:2px;background:#222"></div>
<div style="left:613px;top:660px;width:272px;height:157px;background:#c9c9c9;border:1px solid #bdbdbd;box-sizing:border-box"></div>
<div class="t" style="left:632.00px;top:668.46px;font-size:16px;line-height:16px;color:#1a1a1a;letter-spacing:0.126px;font-family:'Liberation Sans', sans-serif;font-weight:bold;">Settings</div>
<div class="t" style="left:646.80px;top:702.57px;font-size:13.5px;line-height:13.5px;color:#1e1e1e;letter-spacing:1.229px;font-family:'Liberation Sans', sans-serif;font-weight:normal;">Name</div>
<div style="left:642.4px;top:727.3px;width:232.3px;height:22px;background:#fff;border:1px solid #9a9a9a;box-sizing:border-box"></div>
<div class="t" style="left:648.00px;top:732.65px;font-size:14px;line-height:14px;color:#1a1a1a;letter-spacing:0.232px;font-family:'Liberation Sans', sans-serif;font-weight:normal;">VBFunction_5</div>
<div class="t" style="left:647.00px;top:763.57px;font-size:13.5px;line-height:13.5px;color:#1e1e1e;letter-spacing:-0.590px;font-family:'Liberation Sans', sans-serif;font-weight:normal;">Type</div>
<div style="left:642.4px;top:787.4px;width:232.3px;height:22px;background:#fff;border:1px solid #9a9a9a;box-sizing:border-box"></div>
<div class="t" style="left:648.00px;top:792.65px;font-size:14px;line-height:14px;color:#1a1a1a;letter-spacing:-0.706px;font-family:'Liberation Sans', sans-serif;font-weight:normal;">Sub</div>
<div style="left:852.7px;top:788.4px;width:21px;height:20px;background:linear-gradient(#bfe0f5,#8cc6ea);border:1px solid #5aa0d0;box-sizing:border-box"></div>
<svg style="position:absolute;left:857px;top:795px;" width="12" height="7" viewBox="0 0 12 7"><path d="M0 0 H11 L5.5 6Z" fill="#1a1a1a"/></svg>
<div style="left:643px;top:809.4px;width:234.6px;height:60px;background:#fff;border:1.5px solid #111;box-sizing:border-box"></div>
<div class="t" style="left:647.50px;top:816.15px;font-size:14px;line-height:14px;color:#1a1a1a;letter-spacing:0.543px;font-family:'Liberation Sans', sans-serif;font-weight:normal;">Function</div>
<div style="left:645.5px;top:835.8px;width:229.5px;height:16.5px;background:#3563d6"></div>
<div class="t" style="left:647.50px;top:838.15px;font-size:14px;line-height:14px;color:#ffffff;letter-spacing:-0.706px;font-family:'Liberation Sans', sans-serif;font-weight:normal;">Sub</div>
<div style="left:900.5px;top:660px;width:429px;height:210px;background:#c9c9c9;border:1px solid #bdbdbd;box-sizing:border-box"></div>
<div class="t" style="left:919.00px;top:669.26px;font-size:16px;line-height:16px;color:#1a1a1a;letter-spacing:0.466px;font-family:'Liberation Sans', sans-serif;font-weight:bold;">Parameter</div>
<div style="left:930px;top:698px;width:392.6px;height:23px;background:linear-gradient(#f0f0f0,#dcdcdc);border-bottom:1px solid #b0b0b0;box-sizing:border-box"></div>
<div style="left:959px;top:698px;width:1px;height:23px;background:#b9b9b9"></div>
<div class="t" style="left:964.00px;top:704.07px;font-size:13.5px;line-height:13.5px;color:#1e1e1e;letter-spacing:0.663px;font-family:'Liberation Sans', sans-serif;font-weight:normal;">Name</div>
<div class="t" style="left:1181.60px;top:704.07px;font-size:13.5px;line-height:13.5px;color:#1e1e1e;letter-spacing:0.377px;font-family:'Liberation Sans', sans-serif;font-weight:normal;">Type</div>
<div style="left:930px;top:721px;width:29px;height:142px;background:#c4c4c4"></div>
<div style="left:959px;top:721px;width:363.6px;height:142px;background:#efefef"></div>
<div style="left:930px;top:745px;width:392.6px;height:1px;background:#fbfbfb"></div>
<div style="left:930px;top:769px;width:392.6px;height:1px;background:#fbfbfb"></div>
<div style="left:930px;top:792.6px;width:392.6px;height:1px;background:#fbfbfb"></div>
<div style="left:930px;top:816.6px;width:392.6px;height:1px;background:#fbfbfb"></div>
<div style="left:930px;top:840.3px;width:392.6px;height:1px;background:#fbfbfb"></div>
<div style="left:1177px;top:721px;width:1px;height:142px;background:#fbfbfb"></div>
<div style="left:1280.5px;top:721px;width:1px;height:142px;background:#fbfbfb"></div>
<div class="t" style="left:965.00px;top:726.57px;font-size:13.5px;line-height:13.5px;color:#1e1e1e;letter-spacing:0.712px;font-family:'Liberation Sans', sans-serif;font-weight:normal;">&lt;Add new&gt;</div>
<div style="left:591.7px;top:755px;width:303.5px;height:110px;border:4px solid #e2202b;box-sizing:border-box"></div>
<div style="left:1161.6px;top:550.5px;width:139px;height:26px;background:linear-gradient(#f2f2f2,#e6e6e6)"></div>
<div class="t" style="left:1189.00px;top:555.61px;font-size:17px;line-height:17px;color:#1a1a1a;letter-spacing:-0.565px;font-family:'Liberation Sans', sans-serif;font-weight:bold;">Properties</div>
<div style="left:1302px;top:550.5px;width:94.3px;height:26px;background:linear-gradient(#e0e0e0,#d2d2d2);border-left:1px solid #999;box-sizing:border-box"></div>
<div class="t" style="left:1330.00px;top:555.61px;font-size:17px;line-height:17px;color:#444;letter-spacing:1.215px;font-family:'Liberation Sans', sans-serif;font-weight:normal;">Info</div>
<div style="left:1398.4px;top:550.5px;width:150.8px;height:26px;background:linear-gradient(#e0e0e0,#d2d2d2);border-left:1px solid #999;border-right:1px solid #999;box-sizing:border-box"></div>
<div class="t" style="left:1426.00px;top:555.61px;font-size:17px;line-height:17px;color:#555;letter-spacing:0.613px;font-family:'Liberation Sans', sans-serif;font-weight:normal;">Diagnostics</div>
<div style="left:30px;top:240.2px;width:314px;height:1.2px;background:#fdfdfd"></div>
<div style="left:30px;top:263.9px;width:314px;height:1.2px;background:#fdfdfd"></div>
<div style="left:30px;top:287.6px;width:314px;height:1.2px;background:#fdfdfd"></div>
<div style="left:30px;top:311.3px;width:314px;height:1.2px;background:#fdfdfd"></div>
<div style="left:30px;top:335.0px;width:314px;height:1.2px;background:#fdfdfd"></div>
<div style="left:30px;top:358.7px;width:314px;height:1.2px;background:#fdfdfd"></div>
<div style="left:30px;top:382.4px;width:314px;height:1.2px;background:#fdfdfd"></div>
<div style="left:30px;top:406.1px;width:314px;height:1.2px;background:#fdfdfd"></div>
<div style="left:30px;top:429.79999999999995px;width:314px;height:1.2px;background:#fdfdfd"></div>
<div style="left:30px;top:453.5px;width:314px;height:1.2px;background:#fdfdfd"></div>
<div style="left:30px;top:477.2px;width:314px;height:1.2px;background:#fdfdfd"></div>
<div style="left:30px;top:500.9px;width:314px;height:1.2px;background:#fdfdfd"></div>
<div style="left:30px;top:524.5999999999999px;width:314px;height:1.2px;background:#fdfdfd"></div>
<div style="left:30px;top:548.3px;width:314px;height:1.2px;background:#fdfdfd"></div>
<div style="left:30px;top:572.0px;width:314px;height:1.2px;background:#fdfdfd"></div>
<div style="left:30px;top:595.7px;width:314px;height:1.2px;background:#fdfdfd"></div>
<div style="left:30px;top:619.4px;width:314px;height:1.2px;background:#fdfdfd"></div>
<div style="left:319.5px;top:217px;width:1.2px;height:425px;background:#fdfdfd"></div>
<div style="left:30px;top:550.3px;width:314px;height:21.2px;background:#d9dde0"></div>
<div style="left:320.7px;top:550.3px;width:24.8px;height:21.2px;background:#d6d9dc"></div>
<div style="left:30px;top:550.3px;width:289px;height:19.2px;border:1px dashed #6a6a6a;"></div>
<svg style="position:absolute;left:83.7px;top:223.8px;" width="6" height="10" viewBox="0 0 6 10"><path d="M0 0 L5.5 5 L0 10Z" fill="#000"/></svg>
<svg style="position:absolute;left:98.5px;top:218.5px" width="20" height="20" viewBox="0 0 20 20"><defs><linearGradient id="fg" x1="0" y1="0" x2="0" y2="1"><stop offset="0" stop-color="#fbe6a0"/><stop offset="1" stop-color="#eab94a"/></linearGradient></defs><path d="M0.5 1.5 H6.5 L8 3 H17.5 V16.5 H0.5Z" fill="url(#fg)" stroke="#d2a73c" stroke-width="1"/><rect x="4.5" y="6.5" width="14" height="11.5" fill="#c9d2f0" stroke="#555c70" stroke-width="1.4"/><rect x="5.5" y="7.5" width="12" height="9.5" fill="#b8c2ea"/></svg>
<div class="t" style="left:124.60px;top:221.75px;font-size:14px;line-height:14px;color:#262626;letter-spacing:0.240px;font-family:'Liberation Sans', sans-serif;font-weight:normal;">Screens</div>
<svg style="position:absolute;left:83.7px;top:247.5px;" width="6" height="10" viewBox="0 0 6 10"><path d="M0 0 L5.5 5 L0 10Z" fill="#000"/></svg>
<svg style="position:absolute;left:98.5px;top:242.2px" width="20" height="20" viewBox="0 0 20 20"><defs><linearGradient id="fg" x1="0" y1="0" x2="0" y2="1"><stop offset="0" stop-color="#fbe6a0"/><stop offset="1" stop-color="#eab94a"/></linearGradient></defs><path d="M0.5 1.5 H6.5 L8 3 H17.5 V16.5 H0.5Z" fill="url(#fg)" stroke="#d2a73c" stroke-width="1"/><rect x="4.5" y="6.5" width="14" height="11.5" fill="#dde4f8" stroke="#555c70" stroke-width="1.4"/><path d="M9 8.5 V11 Q11.5 13 14 11 V8.5 M11.5 12 V17" stroke="#2440b8" stroke-width="2" fill="none"/></svg>
<div class="t" style="left:124.60px;top:245.45px;font-size:14px;line-height:14px;color:#262626;letter-spacing:0.877px;font-family:'Liberation Sans', sans-serif;font-weight:normal;">Screen management</div>
<svg style="position:absolute;left:83.7px;top:271.2px;" width="6" height="10" viewBox="0 0 6 10"><path d="M0 0 L5.5 5 L0 10Z" fill="#000"/></svg>
<svg style="position:absolute;left:98.5px;top:265.9px" width="20" height="20" viewBox="0 0 20 20"><defs><linearGradient id="fg" x1="0" y1="0" x2="0" y2="1"><stop offset="0" stop-color="#fbe6a0"/><stop offset="1" stop-color="#eab94a"/></linearGradient></defs><path d="M0.5 1.5 H6.5 L8 3 H17.5 V16.5 H0.5Z" fill="url(#fg)" stroke="#d2a73c" stroke-width="1"/><path d="M3 14 L7 11 H18.5 V18 H7Z" fill="#6a2fc0" stroke="#3b1780" stroke-width="0.8"/><path d="M9 13.3 H16 M9 15.6 H16" stroke="#e8dcff" stroke-width="1.3"/></svg>
<div class="t" style="left:124.60px;top:269.15px;font-size:14px;line-height:14px;color:#262626;letter-spacing:0.069px;font-family:'Liberation Sans', sans-serif;font-weight:normal;">HMI tags</div>
<svg style="position:absolute;left:99.0px;top:291.6px;" width="20" height="19" viewBox="0 0 20 19"><rect x="0.5" y="0.5" width="5" height="5" fill="#3a5fd8"/><path d="M4 3 H11 L4 13 H12" stroke="#3351d0" stroke-width="2.6" fill="none" stroke-linejoin="round"/><circle cx="15" cy="13" r="3.4" fill="#3a5fd8"/></svg>
<div class="t" style="left:124.60px;top:292.85px;font-size:14px;line-height:14px;color:#262626;letter-spacing:0.507px;font-family:'Liberation Sans', sans-serif;font-weight:normal;">Connections</div>
<svg style="position:absolute;left:99.0px;top:317.3px;" width="20" height="14" viewBox="0 0 20 14"><rect x="0.7" y="0.7" width="17.5" height="11.5" fill="#e4e9fa" stroke="#8c98d8" stroke-width="1.4"/><path d="M1 1 L9.5 7.5 L18 1" stroke="#8c98d8" stroke-width="1.3" fill="none"/></svg>
<div class="t" style="left:124.60px;top:316.55px;font-size:14px;line-height:14px;color:#262626;letter-spacing:0.282px;font-family:'Liberation Sans', sans-serif;font-weight:normal;">HMI alarms</div>
<svg style="position:absolute;left:99.0px;top:339.0px;" width="20" height="20" viewBox="0 0 20 20"><path d="M3 1 H16 V9 H3Z" fill="#b9d6f0" stroke="#6f94c8" stroke-width="1"/><path d="M2 4 H17 V10 H2Z" fill="#d5e8f8" stroke="#6f94c8" stroke-width="1"/><rect x="0.5" y="9" width="18" height="9" fill="#2a3fd8" stroke="#1a24a0" stroke-width="1"/><rect x="6" y="12" width="6" height="2.5" fill="#fff"/></svg>
<div class="t" style="left:124.60px;top:340.25px;font-size:14px;line-height:14px;color:#262626;letter-spacing:-0.080px;font-family:'Liberation Sans', sans-serif;font-weight:normal;">Recipes</div>
<svg style="position:absolute;left:99.0px;top:362.7px;" width="20" height="19" viewBox="0 0 20 19"><rect x="0.5" y="0.5" width="5.5" height="17" fill="#6f7280" stroke="#3e4048" stroke-width="0.8"/><rect x="2" y="3" width="2.5" height="8" fill="#f2f2f2"/><circle cx="3.3" cy="14.5" r="1.2" fill="#111"/><rect x="6.5" y="0.5" width="5.5" height="17" fill="#6f7280" stroke="#3e4048" stroke-width="0.8"/><rect x="8" y="3" width="2.5" height="8" fill="#f2f2f2"/><circle cx="9.3" cy="14.5" r="1.2" fill="#111"/><rect x="12.5" y="0.5" width="5.5" height="17" fill="#6f7280" stroke="#3e4048" stroke-width="0.8"/><rect x="14" y="3" width="2.5" height="8" fill="#f2f2f2"/><circle cx="15.3" cy="14.5" r="1.2" fill="#111"/></svg>
<div class="t" style="left:124.60px;top:363.95px;font-size:14px;line-height:14px;color:#262626;letter-spacing:0.500px;font-family:'Liberation Sans', sans-serif;font-weight:normal;">Historical data</div>
<svg style="position:absolute;left:81.2px;top:391.2px;" width="11" height="6" viewBox="0 0 11 6"><path d="M0 0 H10.5 L5.25 5.5Z" fill="#000"/></svg>
<svg style="position:absolute;left:98.5px;top:384.4px" width="20" height="20" viewBox="0 0 20 20"><defs><linearGradient id="fg" x1="0" y1="0" x2="0" y2="1"><stop offset="0" stop-color="#fbe6a0"/><stop offset="1" stop-color="#eab94a"/></linearGradient></defs><path d="M0.5 1.5 H6.5 L8 3 H17.5 V16.5 H0.5Z" fill="url(#fg)" stroke="#d2a73c" stroke-width="1"/><rect x="4.5" y="6.5" width="14" height="12" fill="#f4f6fc" stroke="#6b7390" stroke-width="1.2"/><rect x="8" y="8.5" width="2.5" height="3" fill="#283a78"/><rect x="12" y="8.5" width="1.4" height="3" fill="#283a78"/><rect x="8.3" y="13" width="1.4" height="3" fill="#283a78"/><rect x="11" y="13" width="2.5" height="3" fill="#283a78"/></svg>
<div class="t" style="left:124.60px;top:387.65px;font-size:14px;line-height:14px;color:#262626;letter-spacing:0.185px;font-family:'Liberation Sans', sans-serif;font-weight:normal;">Scripts</div>
<svg style="position:absolute;left:102.7px;top:414.90000000000003px;" width="11" height="6" viewBox="0 0 11 6"><path d="M0 0 H10.5 L5.25 5.5Z" fill="#000"/></svg>
<svg style="position:absolute;left:121.0px;top:408.8px" width="20" height="20" viewBox="0 0 20 20"><defs><linearGradient id="fg" x1="0" y1="0" x2="0" y2="1"><stop offset="0" stop-color="#fbe6a0"/><stop offset="1" stop-color="#eab94a"/></linearGradient></defs><path d="M0.5 1.5 H6.5 L8 3 H17.5 V16.5 H0.5Z" fill="url(#fg)" stroke="#d2a73c" stroke-width="1"/><rect x="4" y="6" width="15" height="12" fill="#1a8ee0" stroke="#0f5fb0" stroke-width="0.8"/><text x="5" y="15.5" font-family="Liberation Sans" font-weight="bold" font-size="9" fill="#fff">VB</text></svg>
<div class="t" style="left:146.30px;top:411.35px;font-size:14px;line-height:14px;color:#262626;letter-spacing:0.121px;font-family:'Liberation Sans', sans-serif;font-weight:normal;">VB scripts</div>
<svg style="position:absolute;left:144px;top:432.79999999999995px;" width="22" height="20" viewBox="0 0 22 20"><defs><linearGradient id="ag" x1="0" y1="0" x2="1" y2="1"><stop offset="0" stop-color="#6a7ff0"/><stop offset="1" stop-color="#1a22b8"/></linearGradient></defs><rect x="0" y="4" width="15" height="15" fill="url(#ag)"/><path d="M14 0 V9 M9.5 4.5 H18.5 M10.8 1.3 L17.2 7.7 M17.2 1.3 L10.8 7.7" stroke="#7cc832" stroke-width="1.4"/><circle cx="14" cy="4.5" r="2.6" fill="#f4f040"/></svg>
<div class="t" style="left:169.40px;top:435.05px;font-size:14px;line-height:14px;color:#262626;letter-spacing:0.390px;font-family:'Liberation Sans', sans-serif;font-weight:normal;">Add new VB function</div>
<svg style="position:absolute;left:144px;top:457.0px;" width="19" height="19" viewBox="0 0 19 19"><rect x="0.5" y="0.5" width="17" height="17" fill="#fff" stroke="#2a7ed0" stroke-width="1"/><rect x="0.5" y="0.5" width="17" height="9" fill="#1f8fe0"/><text x="2" y="8.6" font-family="Liberation Sans" font-weight="bold" font-size="9" fill="#fff">VB</text><text x="3" y="16.6" font-family="Liberation Sans" font-weight="bold" font-size="7.5" fill="#111">101</text></svg>
<div class="t" style="left:169.40px;top:458.75px;font-size:14px;line-height:14px;color:#262626;letter-spacing:0.105px;font-family:'Liberation Sans', sans-serif;font-weight:normal;">VBFunction_1</div>
<svg style="position:absolute;left:144px;top:480.7px;" width="19" height="19" viewBox="0 0 19 19"><rect x="0.5" y="0.5" width="17" height="17" fill="#fff" stroke="#2a7ed0" stroke-width="1"/><rect x="0.5" y="0.5" width="17" height="9" fill="#1f8fe0"/><text x="2" y="8.6" font-family="Liberation Sans" font-weight="bold" font-size="9" fill="#fff">VB</text><text x="3" y="16.6" font-family="Liberation Sans" font-weight="bold" font-size="7.5" fill="#111">101</text></svg>
<div class="t" style="left:169.40px;top:482.45px;font-size:14px;line-height:14px;color:#262626;letter-spacing:0.287px;font-family:'Liberation Sans', sans-serif;font-weight:normal;">VBFunction_2</div>
<svg style="position:absolute;left:144px;top:504.4px;" width="19" height="19" viewBox="0 0 19 19"><rect x="0.5" y="0.5" width="17" height="17" fill="#fff" stroke="#2a7ed0" stroke-width="1"/><rect x="0.5" y="0.5" width="17" height="9" fill="#1f8fe0"/><text x="2" y="8.6" font-family="Liberation Sans" font-weight="bold" font-size="9" fill="#fff">VB</text><text x="3" y="16.6" font-family="Liberation Sans" font-weight="bold" font-size="7.5" fill="#111">101</text></svg>
<div class="t" style="left:169.40px;top:506.15px;font-size:14px;line-height:14px;color:#262626;letter-spacing:0.287px;font-family:'Liberation Sans', sans-serif;font-weight:normal;">VBFunction_3</div>
<svg style="position:absolute;left:144px;top:528.0999999999999px;" width="19" height="19" viewBox="0 0 19 19"><rect x="0.5" y="0.5" width="17" height="17" fill="#fff" stroke="#2a7ed0" stroke-width="1"/><rect x="0.5" y="0.5" width="17" height="9" fill="#1f8fe0"/><text x="2" y="8.6" font-family="Liberation Sans" font-weight="bold" font-size="9" fill="#fff">VB</text><text x="3" y="16.6" font-family="Liberation Sans" font-weight="bold" font-size="7.5" fill="#111">101</text></svg>
<div class="t" style="left:169.40px;top:529.85px;font-size:14px;line-height:14px;color:#262626;letter-spacing:0.287px;font-family:'Liberation Sans', sans-serif;font-weight:normal;">VBFunction_4</div>
<svg style="position:absolute;left:144px;top:551.8px;" width="19" height="19" viewBox="0 0 19 19"><rect x="0.5" y="0.5" width="17" height="17" fill="#fff" stroke="#2a7ed0" stroke-width="1"/><rect x="0.5" y="0.5" width="17" height="9" fill="#1f8fe0"/><text x="2" y="8.6" font-family="Liberation Sans" font-weight="bold" font-size="9" fill="#fff">VB</text><text x="3" y="16.6" font-family="Liberation Sans" font-weight="bold" font-size="7.5" fill="#111">101</text></svg>
<div class="t" style="left:169.40px;top:553.55px;font-size:14px;line-height:14px;color:#262626;letter-spacing:0.287px;font-family:'Liberation Sans', sans-serif;font-weight:normal;">VBFunction_5</div>
<svg style="position:absolute;left:100.0px;top:576.0px;" width="17" height="19" viewBox="0 0 17 19"><rect x="0.5" y="0.5" width="15.5" height="17.5" fill="#f2f4fc" stroke="#9aa4d8" stroke-width="1"/><rect x="0" y="0" width="16.5" height="3" fill="#3048d0"/><rect x="0" y="16" width="16.5" height="2.5" fill="#3048d0"/><text x="4" y="14.5" font-family="Liberation Sans" font-weight="bold" font-size="12" fill="#1a1a30">5</text></svg>
<div class="t" style="left:124.60px;top:577.25px;font-size:14px;line-height:14px;color:#262626;letter-spacing:0.476px;font-family:'Liberation Sans', sans-serif;font-weight:normal;">Scheduled tasks</div>
<svg style="position:absolute;left:98.5px;top:598.7px;" width="21" height="19" viewBox="0 0 21 19"><path d="M5.5 5.5 H3.5 Q1.5 5.5 1.5 7.5 V15 Q1.5 17 3.5 17 H16.5 Q18.5 17 18.5 15 V7.5 Q18.5 5.5 16.5 5.5 H13" stroke="#2f48d8" stroke-width="3" fill="none"/><path d="M6.5 12 V6 Q6.5 3.5 9 3.5 H9.5 V0.5 L14.5 4.5 L9.5 8.5 V6.3 H9.3 Q9.2 6.3 9.2 6.8 V12Z" fill="#2f48d8"/></svg>
<div class="t" style="left:124.60px;top:600.95px;font-size:14px;line-height:14px;color:#262626;letter-spacing:-0.422px;font-family:'Liberation Sans', sans-serif;font-weight:normal;">Cycles</div>
<svg style="position:absolute;left:83.7px;top:626.6999999999999px;" width="6" height="10" viewBox="0 0 6 10"><path d="M0 0 L5.5 5 L0 10Z" fill="#000"/></svg>
<svg style="position:absolute;left:98.5px;top:621.4px" width="20" height="20" viewBox="0 0 20 20"><defs><linearGradient id="fg" x1="0" y1="0" x2="0" y2="1"><stop offset="0" stop-color="#fbe6a0"/><stop offset="1" stop-color="#eab94a"/></linearGradient></defs><path d="M0.5 1.5 H6.5 L8 3 H17.5 V16.5 H0.5Z" fill="url(#fg)" stroke="#d2a73c" stroke-width="1"/><rect x="4" y="6" width="15" height="12" fill="#dfe3f4" stroke="#8088b0" stroke-width="1"/><rect x="5" y="7" width="8" height="10" fill="#f8f8ff" stroke="#6870a0" stroke-width="0.8"/><path d="M6.5 10 H11.5 M6.5 12.3 H11.5 M6.5 14.6 H11.5" stroke="#202850" stroke-width="1.1"/><path d="M15 7 V17 M17 7 V17" stroke="#8890b8" stroke-width="1"/></svg>
<div class="t" style="left:124.60px;top:624.65px;font-size:14px;line-height:14px;color:#262626;letter-spacing:-0.037px;font-family:'Liberation Sans', sans-serif;font-weight:normal;">Reports</div>
<div style="left:66.3px;top:379.2px;width:252.3px;height:31.3px;border:4.3px solid #e2202b;box-sizing:border-box"></div>
<div style="left:109.4px;top:427.2px;width:206.9px;height:28.8px;border:4.5px solid #e2202b;box-sizing:border-box"></div>
<div style="left:345.5px;top:217px;width:21px;height:425px;background:#b6b6b6"></div>
<div style="left:345.5px;top:218.3px;width:21px;height:20.7px;background:linear-gradient(#f6f6f6,#e2e2e2);border:1px solid #a9a9a9;box-sizing:border-box"></div>
<svg style="position:absolute;left:350px;top:223px;" width="12" height="8" viewBox="0 0 12 8"><path d="M1.5 6.5 L6 2 L10.5 6.5" stroke="#333" stroke-width="2.4" fill="none"/></svg>
<div style="left:345.5px;top:294.7px;width:21px;height:125px;background:linear-gradient(90deg,#e6e6e6,#f4f4f4 40%,#dcdcdc);border:1px solid #a9a9a9;box-sizing:border-box"></div>
<svg style="position:absolute;left:350px;top:352px;" width="12" height="10" viewBox="0 0 12 10"><path d="M1 1.5H11M1 4.5H11M1 7.5H11" stroke="#555" stroke-width="1"/></svg>
<div style="left:345.5px;top:620.5px;width:21px;height:21px;background:linear-gradient(#f6f6f6,#e2e2e2);border:1px solid #a9a9a9;box-sizing:border-box"></div>
<svg style="position:absolute;left:350px;top:627px;" width="12" height="8" viewBox="0 0 12 8"><path d="M1.5 1.5 L6 6 L10.5 1.5" stroke="#555" stroke-width="2.4" fill="none"/></svg>
<div style="left:30px;top:642px;width:337px;height:4px;background:#1f1f29"></div>
<div style="left:30px;top:646px;width:337px;height:26px;background:linear-gradient(#ececec,#dadada);border-bottom:1px solid #a0a0a0;box-sizing:border-box"></div>
<div style="left:55px;top:646px;width:1px;height:26px;background:#a8a8a8"></div>
<svg style="position:absolute;left:36px;top:653px;" width="13" height="9" viewBox="0 0 13 9"><path d="M1.5 1.5 L6.5 6.5 L11.5 1.5" stroke="#1a1a1a" stroke-width="2.6" fill="none"/></svg>
<div class="t" style="left:62.00px;top:650.61px;font-size:17px;line-height:17px;color:#1a1a1a;letter-spacing:0.197px;font-family:'Liberation Sans', sans-serif;font-weight:bold;">Details view</div>
<div style="left:30px;top:672px;width:337px;height:31px;background:#c8c8c8;border-bottom:1px solid #8d8d8d;box-sizing:border-box"></div>
<div style="left:30px;top:703px;width:337px;height:35px;background:#ececec"></div>
<div style="left:30px;top:738px;width:337px;height:22px;background:linear-gradient(#f0f0f0,#dcdcdc);border-top:1px solid #c4c4c4;border-bottom:1px solid #b0b0b0;box-sizing:border-box"></div>
<div style="left:53px;top:738px;width:1px;height:22px;background:#bcbcbc"></div>
<div style="left:253px;top:738px;width:1px;height:22px;background:#bcbcbc"></div>
<div class="t" style="left:58.00px;top:743.57px;font-size:13.5px;line-height:13.5px;color:#1e1e1e;letter-spacing:0.829px;font-family:'Liberation Sans', sans-serif;font-weight:normal;">Name</div>
<div style="left:30px;top:760px;width:337px;height:103px;background:#efefef"></div>
<div style="left:30px;top:785.3px;width:337px;height:1px;background:#fbfbfb"></div>
<div style="left:30px;top:809px;width:337px;height:1px;background:#fbfbfb"></div>
<div style="left:30px;top:832.5px;width:337px;height:1px;background:#fbfbfb"></div>
<div style="left:30px;top:856.3px;width:337px;height:1px;background:#fbfbfb"></div>
<svg style="position:absolute;left:1165px;top:554px;" width="21" height="19" viewBox="0 0 21 19"><rect x="0.5" y="0.5" width="15" height="16" fill="#eef0fa" stroke="#9aa0d0" stroke-width="1"/><path d="M2.5 4 H5 M2.5 7 H5 M2.5 10 H5" stroke="#6a70a0" stroke-width="1"/><circle cx="11" cy="9" r="4.3" fill="#f8f8ff" stroke="#333" stroke-width="1.8"/><path d="M14 12 L19 17" stroke="#2a50c0" stroke-width="2.6"/></svg>
<svg style="position:absolute;left:1306px;top:554px;" width="21" height="19" viewBox="0 0 21 19"><rect x="3" y="3" width="13" height="14" fill="#eef0fa" stroke="#9aa0d0" stroke-width="1"/><path d="M0 3.5 H5" stroke="#111" stroke-width="1.6"/><path d="M4 1 L7 3.5 L4 6Z" fill="#111"/><circle cx="10" cy="5" r="1.4" fill="#111"/><path d="M8 8 H10.5 V15 M8 15 H12.5" stroke="#111" stroke-width="2.2" fill="none"/><path d="M14 9 V15.5 H18" stroke="#2a40c0" stroke-width="1.6" fill="none"/><path d="M17 13 L20 15.5 L17 18Z" fill="#2a40c0"/></svg>
<svg style="position:absolute;left:1374px;top:558px;" width="18" height="14" viewBox="0 0 18 14"><ellipse cx="8.7" cy="6.7" rx="8.3" ry="6.5" fill="#f0dc20" stroke="#b0a010" stroke-width="0.8"/><circle cx="8.7" cy="3" r="1.3" fill="#111"/><path d="M7 5.5 H9.5 V11 M7 11 H11" stroke="#111" stroke-width="2" fill="none"/></svg>
<svg style="position:absolute;left:1405px;top:554px;" width="16" height="19" viewBox="0 0 16 19"><rect x="0.5" y="0.5" width="14" height="17" fill="#eef0fa" stroke="#9aa0d0" stroke-width="1"/><path d="M3.5 2 V7 Q3.5 10 6 10 Q8.5 10 8.5 7 V2 M6 10 V13 Q6 15.5 9 15.5 H10" stroke="#333" stroke-width="1.4" fill="none"/><circle cx="11" cy="15" r="1.6" fill="#333"/></svg>
<svg style="position:absolute;left:1573px;top:553px;" width="16" height="15" viewBox="0 0 16 15"><path d="M4.5 1 H14.5 V10.5" stroke="#fff" stroke-width="2" fill="none"/><rect x="1" y="4.5" width="10" height="10" fill="#fff"/></svg>
<svg style="position:absolute;left:1596px;top:553px;" width="16" height="15" viewBox="0 0 16 15"><rect x="0.5" y="0.5" width="14" height="14" fill="none" stroke="#fff" stroke-width="1.2"/><path d="M1 5 H14 M1 8 H14" stroke="#fff" stroke-width="1.2"/></svg>
<svg style="position:absolute;left:1618px;top:557px;" width="10" height="8" viewBox="0 0 10 8"><path d="M0 0 H12 L6 7Z" fill="#fff"/></svg>
</body></html>
